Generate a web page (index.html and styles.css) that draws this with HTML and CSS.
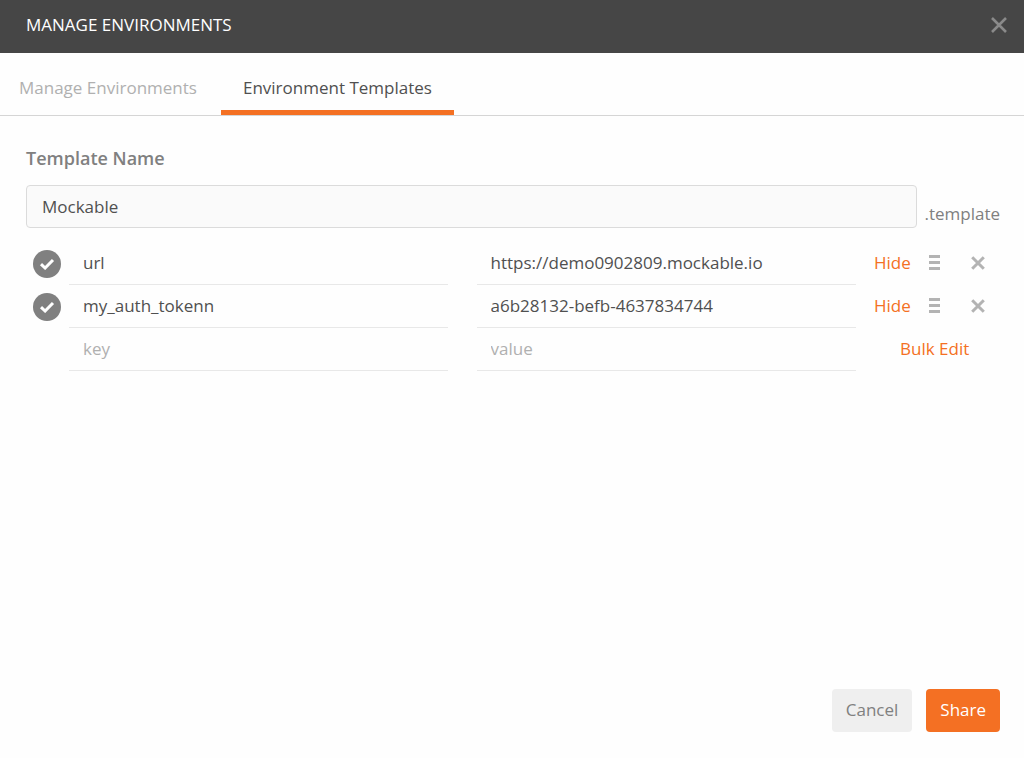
FILE: index.html
```html
<!DOCTYPE html>
<html lang="en">
<head>
<meta charset="utf-8">
<meta name="viewport" content="width=device-width, initial-scale=1">
<title>Manage Environments</title>
<link rel="stylesheet" href="styles.css">
</head>
<body>
<main class="modal">
  <header class="modal-header">
    <h1 class="modal-title">MANAGE ENVIRONMENTS</h1>
    <button class="icon-button modal-close" type="button" aria-label="Close">
      <svg width="18" height="18" viewBox="0 0 18 18"><path d="M2 2l14 14M16 2L2 16" stroke="currentColor" stroke-width="2.6" fill="none"/></svg>
    </button>
  </header>

  <nav class="tabs" role="tablist">
    <button class="tab" type="button" role="tab" aria-selected="false">Manage Environments</button>
    <button class="tab tab-active" type="button" role="tab" aria-selected="true">Environment Templates</button>
  </nav>

  <form class="editor">
    <label class="name-label" for="template-name">Template Name</label>
    <div class="name-row">
      <input class="name-input" id="template-name" type="text" value="Mockable">
      <span class="name-suffix">.template</span>
    </div>

    <div class="variables">
      <div class="variable">
        <label class="toggle">
          <input class="toggle-input" type="checkbox" checked aria-label="Enable url">
          <svg class="toggle-mark" width="16" height="12" viewBox="0 0 16 12"><path d="M2 6.2l4.1 3.8L14 2" stroke="currentColor" stroke-width="3" fill="none"/></svg>
        </label>
        <input class="cell" type="text" value="url" aria-label="Key">
        <input class="cell cell-value" type="text" value="https://demo0902809.mockable.io" aria-label="Value">
        <div class="actions">
          <button class="link-button" type="button">Hide</button>
          <button class="icon-button grip" type="button" aria-label="Reorder">
            <svg width="11" height="15" viewBox="0 0 11 15"><path d="M0 1.5h11M0 7.5h11M0 13.5h11" stroke="currentColor" stroke-width="3"/></svg>
          </button>
          <button class="icon-button" type="button" aria-label="Remove">
            <svg width="14" height="14" viewBox="0 0 14 14"><path d="M1.2 1.2l11.6 11.6M12.8 1.2L1.2 12.8" stroke="currentColor" stroke-width="3" fill="none"/></svg>
          </button>
        </div>
      </div>
      <div class="variable">
        <label class="toggle">
          <input class="toggle-input" type="checkbox" checked aria-label="Enable my_auth_tokenn">
          <svg class="toggle-mark" width="16" height="12" viewBox="0 0 16 12"><path d="M2 6.2l4.1 3.8L14 2" stroke="currentColor" stroke-width="3" fill="none"/></svg>
        </label>
        <input class="cell" type="text" value="my_auth_tokenn" aria-label="Key">
        <input class="cell cell-value" type="text" value="a6b28132-befb-4637834744" aria-label="Value">
        <div class="actions">
          <button class="link-button" type="button">Hide</button>
          <button class="icon-button grip" type="button" aria-label="Reorder">
            <svg width="11" height="15" viewBox="0 0 11 15"><path d="M0 1.5h11M0 7.5h11M0 13.5h11" stroke="currentColor" stroke-width="3"/></svg>
          </button>
          <button class="icon-button" type="button" aria-label="Remove">
            <svg width="14" height="14" viewBox="0 0 14 14"><path d="M1.2 1.2l11.6 11.6M12.8 1.2L1.2 12.8" stroke="currentColor" stroke-width="3" fill="none"/></svg>
          </button>
        </div>
      </div>
      <div class="variable">
        <span></span>
        <input class="cell" type="text" placeholder="key" aria-label="New key">
        <input class="cell cell-value" type="text" placeholder="value" aria-label="New value">
        <div class="actions actions-bulk">
          <button class="link-button" type="button">Bulk Edit</button>
        </div>
      </div>
    </div>
  </form>

  <footer class="modal-footer">
    <button class="button" type="button">Cancel</button>
    <button class="button button-primary" type="button">Share</button>
  </footer>
</main>
</body>
</html>
```

FILE: styles.css
```css
* {
  box-sizing: border-box;
}

body {
  margin: 0;
  background: #fefefe;
  color: #505050;
  font: 17px/24px "Open Sans", "Noto Sans", sans-serif;
}

button,
input {
  margin: 0;
  padding: 0;
  border: 0;
  background: none;
  color: inherit;
  font: inherit;
}

button {
  cursor: pointer;
}

svg {
  display: block;
}

.modal {
  display: flex;
  flex-direction: column;
  min-height: 100vh;
}

.modal-header {
  display: flex;
  align-items: center;
  justify-content: space-between;
  height: 53px;
  padding: 0 16px 4px 26px;
  background: #464646;
}

.modal-title {
  margin: 0;
  color: #fff;
  font-size: 17px;
  font-weight: 500;
}

.icon-button {
  color: #b3b3b3;
}

.modal-close {
  color: #8a8a8a;
}

.tabs {
  display: flex;
  height: 63px;
  border-bottom: 1px solid #d5d5d5;
}

.tab {
  padding: 13px 22px 0;
  border-bottom: 5px solid transparent;
  color: #b0b0b0;
}

.tab:first-child {
  padding-right: 24px;
  padding-left: 19px;
}

.tab-active {
  border-color: #f47023;
  color: #505050;
}

.editor {
  flex: 1;
  padding: 30px 24px 0 26px;
}

.name-label {
  display: block;
  margin-bottom: 15px;
  color: #808080;
  font-size: 18px;
  font-weight: 600;
}

.name-row {
  display: flex;
  align-items: flex-end;
  gap: 7px;
}

.name-input {
  flex: 1;
  min-width: 0;
  height: 43px;
  padding: 0 15px;
  border: 1px solid #dbdbdb;
  border-radius: 4px;
  background: #fafafa;
}

.name-suffix {
  padding-bottom: 2px;
  color: #808080;
}

.variables {
  margin-top: 14px;
}

.variable {
  display: grid;
  grid-template-columns: 43px 1fr 1fr 144px;
}

.toggle {
  display: grid;
  place-items: center;
  align-self: center;
  width: 28px;
  height: 28px;
  margin-left: 7px;
  border-radius: 50%;
  background: #808080;
  color: #fff;
}

.toggle-input,
.toggle-mark {
  grid-area: 1 / 1;
}

.toggle-input {
  appearance: none;
  width: 28px;
  height: 28px;
}

.toggle-mark {
  visibility: hidden;
  pointer-events: none;
}

.toggle-input:checked + .toggle-mark {
  visibility: visible;
}

.cell {
  min-width: 0;
  height: 43px;
  margin-right: 15px;
  padding: 0 14px 2px;
  border-bottom: 1px solid #e8e8e8;
}

.cell-value {
  margin: 0 0 0 14px;
}

.cell::placeholder {
  color: #b0b0b0;
}

.actions {
  display: flex;
  align-items: center;
  padding: 0 0 2px 18px;
}

.actions-bulk {
  padding-left: 44px;
}

.link-button {
  color: #f47023;
}

.grip {
  margin: 0 31px 0 18px;
}

.modal-footer {
  display: flex;
  justify-content: flex-end;
  gap: 14px;
  padding: 0 24px 26px;
}

.button {
  height: 43px;
  padding: 0 14px 2px;
  border-radius: 4px;
  background: #efefef;
  color: #808080;
}

.button-primary {
  background: #f47023;
  color: #fff;
  font-weight: 500;
}
```
